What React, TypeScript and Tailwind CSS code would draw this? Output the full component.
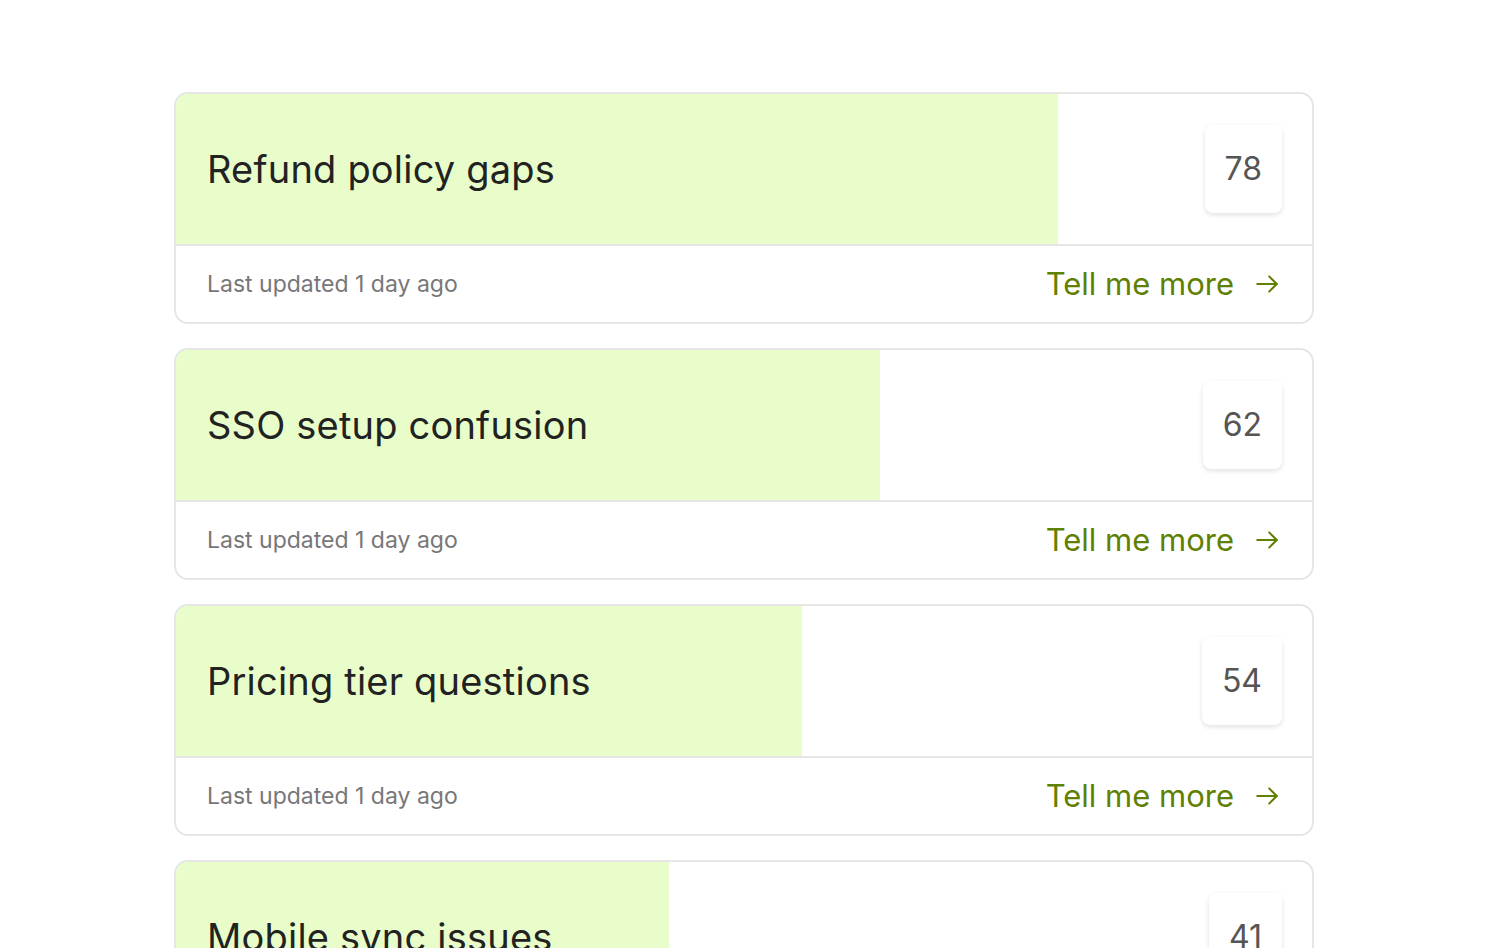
import React from "react";

const items = [
  { title: "Refund policy gaps", score: 78, fill: 77.6 },
  { title: "SSO setup confusion", score: 62, fill: 62 },
  { title: "Pricing tier questions", score: 54, fill: 55.1 },
  { title: "Mobile sync issues", score: 41, fill: 43.4 },
];

function Arrow() {
  return (
    <svg width="26" height="26" viewBox="0 0 24 24" fill="none" stroke="currentColor" strokeWidth="1.8" strokeLinecap="round" strokeLinejoin="round">
      <path d="M3 12h18" />
      <path d="M14 5l7 7-7 7" />
    </svg>
  );
}

export default function App() {
  return (
    <div className="min-h-screen bg-white pt-[92px] px-[174px]" style={{ fontFamily: "Inter, 'Noto Sans', sans-serif" }}>
      <div className="flex flex-col gap-[24px]">
        {items.map((it) => (
          <div key={it.title} className="border-2 border-[#e6e6e6] rounded-[14px] overflow-hidden bg-white">
            <div className="relative h-[152px] border-b-2 border-[#e6e6e6]">
              <div className="absolute inset-y-0 left-0 bg-[#e8fdca]" style={{ width: `${it.fill}%` }} />
              <div className="relative h-full flex items-center justify-between pl-[31px] pr-[30px]">
                <div className="text-[38px] leading-none text-[#222222] tracking-[0.2px]">{it.title}</div>
                <div className="h-[88px] px-[20px] flex items-center justify-center bg-white rounded-[8px] shadow-[0_2px_5px_rgba(0,0,0,0.12)] text-[32px] text-[#555555]">
                  {it.score}
                </div>
              </div>
            </div>
            <div className="h-[76px] flex items-center justify-between pl-[31px] pr-[32px]">
              <div className="text-[23px] text-[#777777]">Last updated 1 day ago</div>
              <div className="flex items-center gap-[20px] text-[#5f8000]">
                <span className="text-[31px]">Tell me more</span>
                <Arrow />
              </div>
            </div>
          </div>
        ))}
      </div>
    </div>
  );
}
